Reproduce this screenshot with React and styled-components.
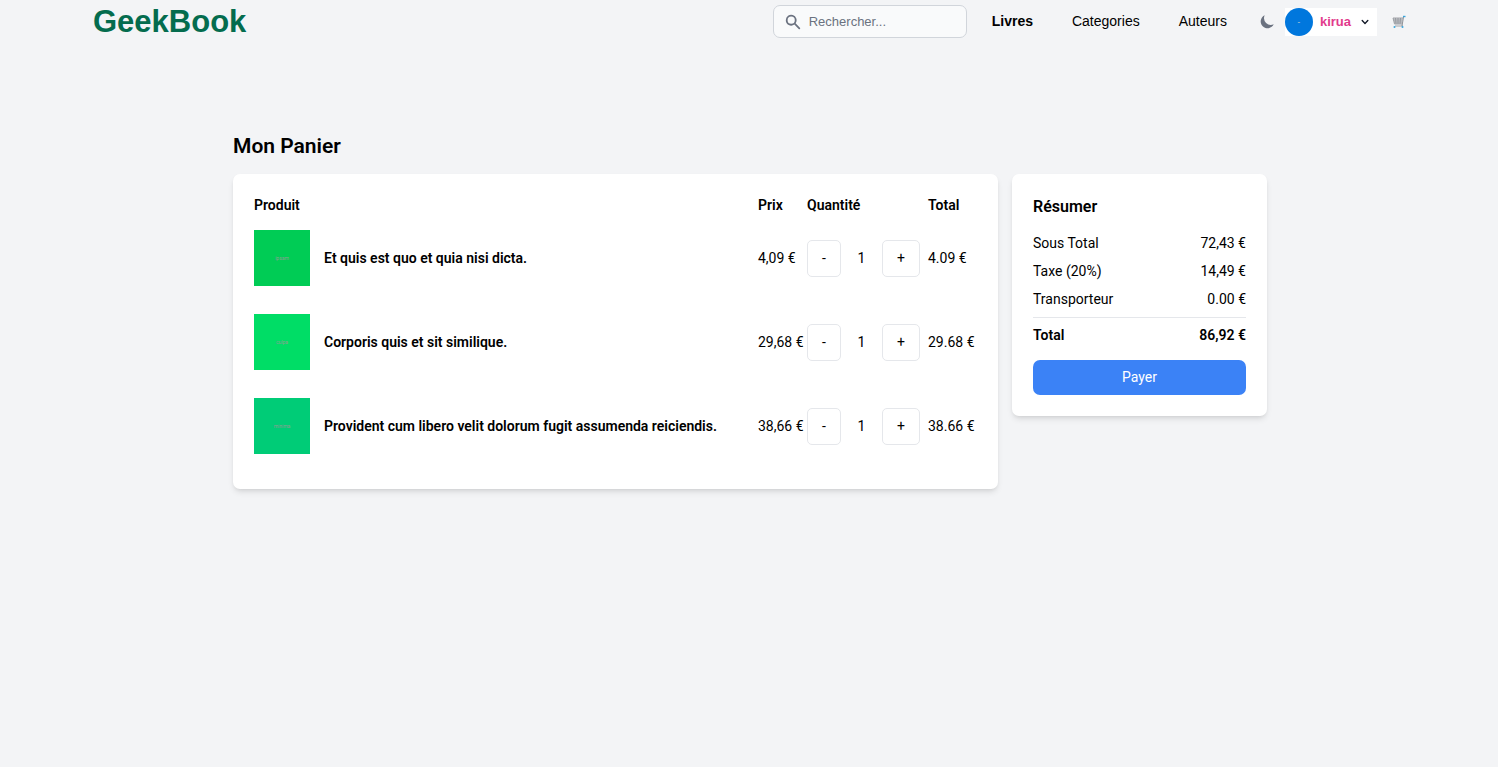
import React, { useState } from "react";
import styled, { createGlobalStyle } from "styled-components";

const GlobalStyle = createGlobalStyle`
  *, *::before, *::after { box-sizing: border-box; }
  body {
    margin: 0;
    background: #f3f4f6;
    color: #000;
    font: 14px/21px Roboto, "Liberation Sans", sans-serif;
  }
  button, input { font: inherit; color: inherit; }
  h1, h2, p { margin: 0; }
`;

const Header = styled.header`
  display: flex;
  align-items: center;
  justify-content: space-between;
  height: 43px;
  padding: 0 92px 0 93px;
  font-family: "Liberation Sans", Arial, sans-serif;
`;

const Logo = styled.a`
  color: #046c4e;
  font-size: 31px;
  line-height: 40px;
  font-weight: 700;
  text-decoration: none;
`;

const Tools = styled.div`
  display: flex;
  align-items: center;
`;

const SearchBox = styled.label`
  display: flex;
  align-items: center;
  gap: 7px;
  width: 194px;
  height: 33px;
  padding: 0 10px;
  border: 1px solid #d1d5db;
  border-radius: 7px;
  background: #f9fafb;
  color: #6b7280;
`;

const SearchInput = styled.input`
  flex: 1;
  min-width: 0;
  padding: 0;
  border: 0;
  outline: 0;
  background: transparent;
  font-size: 13px;
  line-height: 21px;
  &::placeholder { color: #6b7280; opacity: 1; }
`;

const Nav = styled.nav`
  display: flex;
  gap: 39px;
  margin: 0 32px 0 25px;
`;

const NavLink = styled.a`
  color: #000;
  font-weight: ${(p) => (p.$active ? 700 : 400)};
  text-decoration: none;
`;

const IconButton = styled.button`
  display: flex;
  padding: 0;
  border: 0;
  background: transparent;
  color: #6b7280;
  cursor: pointer;
`;

const UserButton = styled.button`
  display: flex;
  align-items: center;
  gap: 7px;
  height: 28px;
  margin: 0 15px 0 9px;
  padding: 0 5px 0 0;
  border: 0;
  background: #fff;
  color: #e23a8c;
  font-size: 13px;
  font-weight: 700;
  cursor: pointer;
`;

const Avatar = styled.span`
  display: grid;
  place-items: center;
  width: 28px;
  height: 28px;
  border-radius: 50%;
  background: #0077dd;
  color: #8fbbd8;
  font-size: 8px;
  line-height: 8px;
`;

const Page = styled.main`
  max-width: 1062px;
  margin: 0 auto;
  padding: 89px 13px 40px 15px;
`;

const PageTitle = styled.h1`
  margin-bottom: 14px;
  font-size: 21px;
  line-height: 28px;
  font-weight: 600;
`;

const Columns = styled.div`
  display: grid;
  grid-template-columns: 3fr 1fr;
  align-items: start;
  gap: 14px;
`;

const Card = styled.section`
  padding: 21px;
  border-radius: 7px;
  background: #fff;
  box-shadow: 0 4px 6px -1px rgba(0, 0, 0, 0.1), 0 2px 4px -2px rgba(0, 0, 0, 0.1);
`;

const CartTable = styled.table`
  width: 100%;
  border-collapse: collapse;
  text-align: left;
  th, td { padding: 0; white-space: nowrap; }
  th { height: 21px; font-weight: 600; }
  td { height: 84px; }
`;

const Column = styled.col`
  width: ${(p) => p.$width}px;
`;

const Product = styled.div`
  display: flex;
  align-items: center;
  gap: 14px;
  font-weight: 600;
`;

const Cover = styled.span`
  display: grid;
  place-items: center;
  width: 56px;
  height: 56px;
  background: ${(p) => p.$color};
  color: #8c9c92;
  font-size: 5px;
  font-weight: 400;
  line-height: 8px;
`;

const Quantity = styled.div`
  display: flex;
  align-items: center;
`;

const StepButton = styled.button`
  height: 37px;
  padding: 0 14px;
  border: 1px solid #e5e7eb;
  border-radius: 5px;
  background: transparent;
  cursor: pointer;
`;

const Count = styled.span`
  width: 41px;
  text-align: center;
`;

const SummaryTitle = styled.h2`
  margin-bottom: 14px;
  font-size: 16px;
  line-height: 24px;
  font-weight: 600;
`;

const SummaryLine = styled.p`
  display: flex;
  justify-content: space-between;
  margin-bottom: 7px;
  font-weight: ${(p) => (p.$strong ? 600 : 400)};
`;

const Divider = styled.hr`
  margin: 7px 0;
  border: 0;
  border-top: 1px solid #e5e7eb;
`;

const PayButton = styled.button`
  width: 100%;
  height: 35px;
  margin-top: 7px;
  border: 0;
  border-radius: 7px;
  background: #3b82f6;
  color: #fff;
  cursor: pointer;
`;

const BOOKS = [
  { title: "Et quis est quo et quia nisi dicta.", price: "4,09 €", total: "4.09 €", color: "#00cc55", word: "ipsam" },
  { title: "Corporis quis et sit similique.", price: "29,68 €", total: "29.68 €", color: "#00dd66", word: "culpa" },
  { title: "Provident cum libero velit dolorum fugit assumenda reiciendis.", price: "38,66 €", total: "38.66 €", color: "#00cc77", word: "minima" },
];

const LINES = [
  ["Sous Total", "72,43 €"],
  ["Taxe (20%)", "14,49 €"],
  ["Transporteur", "0.00 €"],
];

function SearchIcon() {
  return (
    <svg width="18" height="18" viewBox="0 0 20 20" fill="currentColor" aria-hidden="true">
      <path fillRule="evenodd" clipRule="evenodd" d="M8 4a4 4 0 100 8 4 4 0 000-8zM2 8a6 6 0 1110.89 3.476l4.817 4.817a1 1 0 01-1.414 1.414l-4.816-4.816A6 6 0 012 8z" />
    </svg>
  );
}

function MoonIcon() {
  return (
    <svg width="17" height="17" viewBox="0 0 20 20" fill="currentColor" aria-hidden="true">
      <path d="M17.293 13.293A8 8 0 016.707 2.707a8.001 8.001 0 1010.586 10.586z" />
    </svg>
  );
}

function ChevronIcon() {
  return (
    <svg width="14" height="14" viewBox="0 0 20 20" fill="#111827" aria-hidden="true">
      <path fillRule="evenodd" clipRule="evenodd" d="M5.293 7.293a1 1 0 011.414 0L10 10.586l3.293-3.293a1 1 0 111.414 1.414l-4 4a1 1 0 01-1.414 0l-4-4a1 1 0 010-1.414z" />
    </svg>
  );
}

function CartIcon() {
  return (
    <svg width="14" height="14" viewBox="0 0 14 14" fill="none" aria-hidden="true">
      <path d="M1 3h10l-1 6H3z" fill="#d5d7da" />
      <path d="M1 3h10M1.500 5h9M2 7h8M3.500 3l.5 6M6 3v6M8.500 3L8 9M1 3l1.500 6H10M3 11h8" stroke="#8d9197" strokeWidth="0.8" />
      <path d="M10 11l1.500-9" stroke="#8d9197" />
      <path d="M11 1.500h2.500" stroke="#3aa5dc" strokeWidth="1.400" />
      <circle cx="2.500" cy="12" r="1" fill="#3aa5dc" />
      <circle cx="10.500" cy="12" r="1" fill="#3aa5dc" />
    </svg>
  );
}

export default function App() {
  const [query, setQuery] = useState("");
  return (
    <>
      <GlobalStyle />
      <Header>
        <Logo href="#">GeekBook</Logo>
        <Tools>
          <SearchBox>
            <SearchIcon />
            <SearchInput
              type="text"
              aria-label="Rechercher"
              placeholder="Rechercher..."
              value={query}
              onChange={(e) => setQuery(e.target.value)}
            />
          </SearchBox>
          <Nav>
            <NavLink href="#livres" $active>Livres</NavLink>
            <NavLink href="#categories">Categories</NavLink>
            <NavLink href="#auteurs">Auteurs</NavLink>
          </Nav>
          <IconButton type="button" aria-label="Mode sombre"><MoonIcon /></IconButton>
          <UserButton type="button">
            <Avatar>-</Avatar>
            kirua
            <ChevronIcon />
          </UserButton>
          <IconButton type="button" aria-label="Panier"><CartIcon /></IconButton>
        </Tools>
      </Header>
      <Page>
        <PageTitle>Mon Panier</PageTitle>
        <Columns>
          <Card>
            <CartTable>
              <colgroup>
                <col />
                <Column $width={49} />
                <Column $width={121} />
                <Column $width={49} />
              </colgroup>
              <thead>
                <tr>
                  <th scope="col">Produit</th>
                  <th scope="col">Prix</th>
                  <th scope="col">Quantité</th>
                  <th scope="col">Total</th>
                </tr>
              </thead>
              <tbody>
                {BOOKS.map((book) => (
                  <tr key={book.title}>
                    <td>
                      <Product>
                        <Cover $color={book.color}>{book.word}</Cover>
                        {book.title}
                      </Product>
                    </td>
                    <td>{book.price}</td>
                    <td>
                      <Quantity>
                        <StepButton type="button" aria-label="Retirer un exemplaire">-</StepButton>
                        <Count>1</Count>
                        <StepButton type="button" aria-label="Ajouter un exemplaire">+</StepButton>
                      </Quantity>
                    </td>
                    <td>{book.total}</td>
                  </tr>
                ))}
              </tbody>
            </CartTable>
          </Card>
          <Card>
            <SummaryTitle>Résumer</SummaryTitle>
            {LINES.map(([label, amount]) => (
              <SummaryLine key={label}>
                <span>{label}</span>
                <span>{amount}</span>
              </SummaryLine>
            ))}
            <Divider />
            <SummaryLine $strong>
              <span>Total</span>
              <span>86,92 €</span>
            </SummaryLine>
            <PayButton type="button">Payer</PayButton>
          </Card>
        </Columns>
      </Page>
    </>
  );
}
